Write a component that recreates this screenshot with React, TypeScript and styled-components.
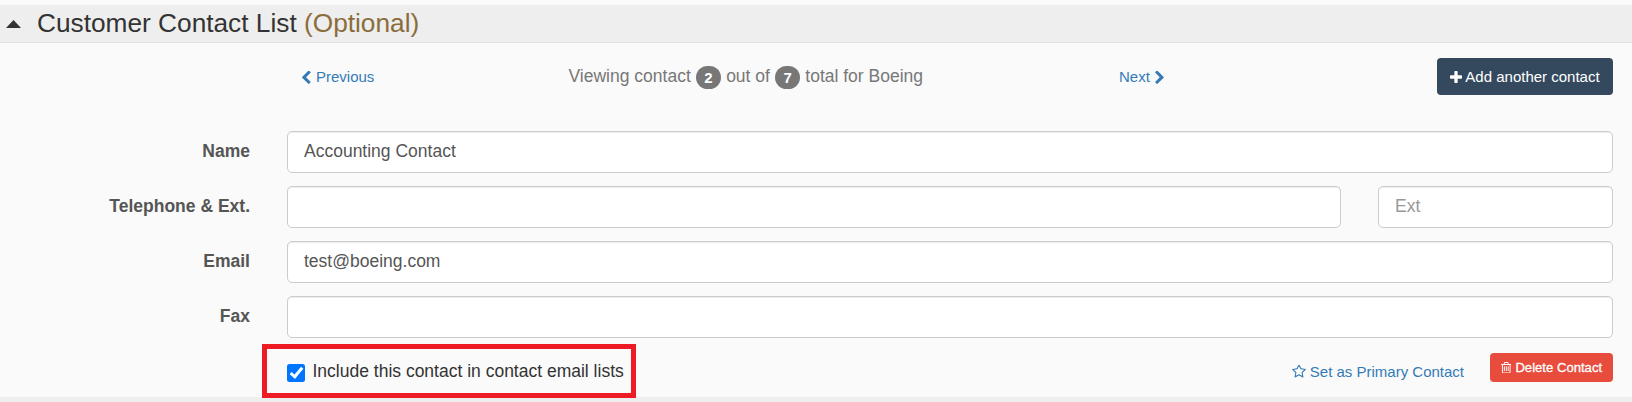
import React from "react";
import styled, { createGlobalStyle } from "styled-components";

const GlobalStyle = createGlobalStyle`
  *, *::before, *::after { box-sizing: border-box; }
  body {
    margin: 0;
    background: #fafafa;
    font-family: "Liberation Sans", Arial, sans-serif;
    font-size: 17.5px;
    color: #333;
  }
`;

const Page = styled.main`
  height: 402px;
  padding-top: 5px;
  overflow: hidden;
  display: flex;
  flex-direction: column;
`;

const Header = styled.header`
  flex: none;
  height: 38px;
  display: flex;
  align-items: center;
  gap: 16.5px;
  padding: 0 0 2px 5.5px;
  background: #eee;
  border-bottom: 1px solid #e2e2e2;
`;

const Caret = styled.svg`
  width: 15px;
  height: 8px;
  margin-top: 2px;
`;

const Title = styled.h2`
  margin: 0;
  font-size: 26.25px;
  line-height: 34px;
  font-weight: 400;
`;

const Optional = styled.span`
  color: #8a6d3b;
`;

const Pager = styled.nav`
  flex: none;
  height: 88px;
  padding: 15px 19px 0 302px;
  display: grid;
  grid-template-columns: 266.5px 550.5px 1fr auto;
  align-items: start;
`;

const Link = styled.a<{ $gap?: number }>`
  display: inline-flex;
  align-items: center;
  gap: ${({ $gap = 5 }) => $gap}px;
  margin-top: 9px;
  font-size: 15px;
  line-height: 20px;
  color: #337ab7;
  text-decoration: none;
  white-space: nowrap;
`;

const Icon = styled.svg<{ $w: number; $h: number }>`
  flex: none;
  width: ${({ $w }) => $w}px;
  height: ${({ $h }) => $h}px;
  fill: currentColor;
`;

const Status = styled.div`
  display: flex;
  align-items: center;
  gap: 5.2px;
  margin-top: 7px;
  height: 24px;
  color: #777;
  white-space: nowrap;
`;

const StatusText = styled.span`
  line-height: 20px;
  margin-bottom: 3px;
`;

const Badge = styled.span`
  width: 25px;
  height: 23px;
  border-radius: 12px;
  background: #777;
  color: #fff;
  font-size: 15px;
  font-weight: 700;
  line-height: 24px;
  text-align: center;
`;

const Button = styled.button<{ $kind: "dark" | "danger" }>`
  display: flex;
  align-items: center;
  justify-content: center;
  border: 0;
  border-radius: 4px;
  padding: 0;
  font-family: inherit;
  color: #fff;
  white-space: nowrap;
  ${({ $kind }) =>
    $kind === "dark"
      ? "width: 176px; height: 37px; margin-left: -3px; gap: 3px; font-size: 15px; background: #34495e;"
      : "width: 123px; height: 29px; gap: 4px; font-size: 13.125px; background: #e74c3c; -webkit-text-stroke: 0.3px #fff;"}
`;

const Form = styled.form`
  flex: none;
  display: flex;
  flex-direction: column;
  gap: 13px;
  padding-right: 19px;
`;

const Row = styled.div`
  display: flex;
  height: 42px;
`;

const Label = styled.label`
  flex: none;
  width: 250px;
  margin-right: 37px;
  line-height: 40px;
  font-weight: 700;
  text-align: right;
  color: #555;
`;

const Input = styled.input<{ $width?: number }>`
  ${({ $width }) => ($width ? `flex: none; width: ${$width}px;` : "flex: 1;")}
  min-width: 0;
  height: 42px;
  padding: 0 16px 1px;
  border: 1px solid #ccc;
  border-radius: 5px;
  background: #fff;
  box-shadow: inset 0 1px 1px rgba(0, 0, 0, 0.075);
  font-family: inherit;
  font-size: 17.5px;
  color: #555;
  outline: none;
  &::placeholder { color: #999; opacity: 1; }
  & + & { margin-left: 37px; }
`;

const Footer = styled.div`
  flex: none;
  display: flex;
  align-items: flex-start;
  height: 59px;
  padding: 6px 19px 0 262px;
`;

const Highlight = styled.label`
  position: relative;
  z-index: 1;
  width: 374px;
  height: 54px;
  display: flex;
  align-items: center;
  gap: 7.5px;
  padding-left: 20px;
  border: 5px solid #ed1c24;
  white-space: nowrap;
`;

const Check = styled.input`
  appearance: none;
  flex: none;
  width: 18px;
  height: 18px;
  margin: 3px 0 0;
  border-radius: 2.5px;
  background: #0075ff;
  display: grid;
  place-items: center;
  &::after {
    content: "";
    width: 7px;
    height: 13px;
    margin-top: -3px;
    border: solid #fff;
    border-width: 0 3px 3px 0;
    transform: rotate(40deg);
  }
`;

const Actions = styled.div`
  margin-left: auto;
  padding-top: 9px;
  display: flex;
  align-items: flex-start;
  gap: 26px;
`;

const NextSection = styled.div`
  flex: none;
  height: 5px;
  background: #eee;
`;

const paths = {
  left: "M1427 301l-531 531 531 531q19 19 19 45t-19 45l-166 166q-19 19-45 19t-45-19l-742-742q-19-19-19-45t19-45l742-742q19-19 45-19t45 19l166 166q19 19 19 45t-19 45z",
  right:
    "M1363 877l-742 742q-19 19-45 19t-45-19l-166-166q-19-19-19-45t19-45l531-531-531-531q-19-19-19-45t19-45l166-166q19-19 45-19t45 19l742 742q19 19 19 45t-19 45z",
  plus: "M1600 736v192q0 40-28 68t-68 28h-416v416q0 40-28 68t-68 28h-192q-40 0-68-28t-28-68v-416h-416q-40 0-68-28t-28-68v-192q0-40 28-68t68-28h416v-416q0-40 28-68t68-28h192q40 0 68 28t28 68v416h416q40 0 68 28t28 68z",
  trash:
    "M704 736v576q0 14-9 23t-23 9h-64q-14 0-23-9t-9-23v-576q0-14 9-23t23-9h64q14 0 23 9t9 23zm256 0v576q0 14-9 23t-23 9h-64q-14 0-23-9t-9-23v-576q0-14 9-23t23-9h64q14 0 23 9t9 23zm256 0v576q0 14-9 23t-23 9h-64q-14 0-23-9t-9-23v-576q0-14 9-23t23-9h64q14 0 23 9t9 23zm128 724v-948h-896v948q0 22 7 40.5t14.5 27 10.5 8.5h832q3 0 10.5-8.5t14.5-27 7-40.5zm-672-1076h448l-48-117q-7-9-17-11h-317q-10 2-17 11zm928 32v64q0 14-9 23t-23 9h-96v948q0 83-47 143.5t-113 60.5h-832q-66 0-113-58.5t-47-141.5v-952h-96q-14 0-23-9t-9-23v-64q0-14 9-23t23-9h309l70-167q15-37 54-63t79-26h320q40 0 79 26t54 63l70 167h309q14 0 23 9t9 23z",
  star: "M1201 1004l306-297-422-62-189-382-189 382-422 62 306 297-73 421 378-199 377 199zm527-357q0 22-26 48l-363 354 86 500q1 7 1 20 0 50-41 50-19 0-40-12l-449-236-449 236q-22 12-40 12-21 0-31.5-14.5t-10.5-35.5q0-6 2-20l86-500-364-354q-25-27-25-48 0-37 56-46l502-73 225-455q19-41 49-41t49 41l225 455 502 73q56 9 56 46z",
};

export default function App() {
  return (
    <>
      <GlobalStyle />
      <Page>
        <Header>
          <Caret viewBox="0 0 15 8">
            <path d="M0 8L7.5 0L15 8z" fill="#333" />
          </Caret>
          <Title>
            Customer Contact List <Optional>(Optional)</Optional>
          </Title>
        </Header>
        <Pager>
          <Link>
            <Icon viewBox="455 83 991 1555" $w={9} $h={13}>
              <path d={paths.left} />
            </Icon>
            Previous
          </Link>
          <Status>
            <StatusText>Viewing contact</StatusText>
            <Badge>2</Badge>
            <StatusText>out of</StatusText>
            <Badge>7</Badge>
            <StatusText>total for Boeing</StatusText>
          </Status>
          <Link>
            Next
            <Icon viewBox="346 83 1036 1555" $w={9} $h={13}>
              <path d={paths.right} />
            </Icon>
          </Link>
          <Button $kind="dark" type="button">
            <Icon viewBox="192 128 1408 1408" $w={12} $h={12}>
              <path d={paths.plus} />
            </Icon>
            Add another contact
          </Button>
        </Pager>
        <Form>
          <Row>
            <Label>Name</Label>
            <Input defaultValue="Accounting Contact" />
          </Row>
          <Row>
            <Label>Telephone &amp; Ext.</Label>
            <Input />
            <Input $width={235} placeholder="Ext" />
          </Row>
          <Row>
            <Label>Email</Label>
            <Input defaultValue="test@boeing.com" />
          </Row>
          <Row>
            <Label>Fax</Label>
            <Input />
          </Row>
        </Form>
        <Footer>
          <Highlight>
            <Check type="checkbox" defaultChecked />
            Include this contact in contact email lists
          </Highlight>
          <Actions>
            <Link $gap={4}>
              <Icon viewBox="64 128 1664 1587" $w={14} $h={13.3}>
                <path d={paths.star} />
              </Icon>
              Set as Primary Contact
            </Link>
            <Button $kind="danger" type="button">
              <Icon viewBox="192 128 1408 1536" $w={10.5} $h={11.5}>
                <path d={paths.trash} />
              </Icon>
              Delete Contact
            </Button>
          </Actions>
        </Footer>
        <NextSection />
      </Page>
    </>
  );
}
